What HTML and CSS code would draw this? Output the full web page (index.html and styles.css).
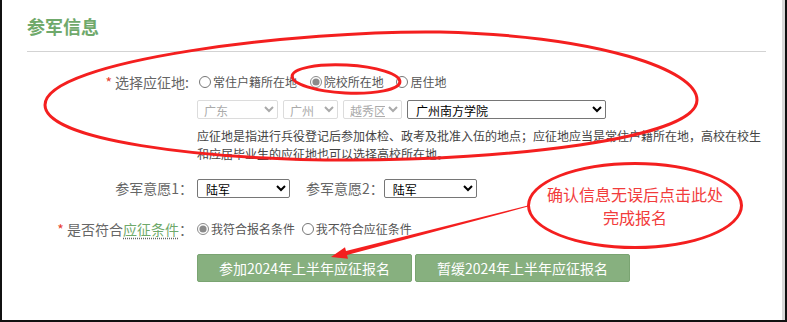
FILE: index.html
```html
<!DOCTYPE html>
<html lang="zh-CN">
<head>
    <meta charset="UTF-8">
    <meta name="viewport" content="width=device-width, initial-scale=1.0">
    <title>参军信息</title>
    <link rel="stylesheet" href="styles.css">
</head>
<body>

    <!-- Enlistment info panel -->
    <div class="frame">
        <div class="panel">
            <h2 class="title">参军信息</h2>

            <div class="form">
                <div class="row">
                    <div class="label label-place"><span class="req">*</span> 选择应征地:</div>
                    <div class="field">
                        <div class="radios">
                            <label class="opt"><input type="radio" name="place"> 常住户籍所在地</label>
                            <label class="opt"><input type="radio" name="place" checked> 院校所在地</label>
                            <label class="opt"><input type="radio" name="place"> 居住地</label>
                        </div>
                        <div class="selects">
                            <select class="sel sel-prov" disabled><option>广东</option></select>
                            <select class="sel sel-city" disabled><option>广州</option></select>
                            <select class="sel sel-dist" disabled><option>越秀区</option></select>
                            <select class="sel sel-school"><option>广州南方学院</option></select>
                        </div>
                        <p class="note">应征地是指进行兵役登记后参加体检、政考及批准入伍的地点；应征地应当是常住户籍所在地，高校在校生和应届毕业生的应征地也可以选择高校所在地。</p>
                    </div>
                </div>

                <div class="row row-wish">
                    <div class="label">参军意愿1：</div>
                    <div class="field field-inline">
                        <select class="sel sel-wish"><option>陆军</option></select>
                        <span class="label-inline">参军意愿2：</span>
                        <select class="sel sel-wish"><option>陆军</option></select>
                    </div>
                </div>

                <div class="row row-cond">
                    <div class="label"><span class="req">*</span> 是否符合<a class="term" href="#">应征条件</a>：</div>
                    <div class="field">
                        <label class="opt opt-tight"><input type="radio" name="cond" checked> 我符合报名条件</label>
                        <label class="opt"><input type="radio" name="cond"> 我不符合应征条件</label>
                    </div>
                </div>

                <div class="actions">
                    <button class="btn">参加2024年上半年应征报名</button>
                    <button class="btn">暂缓2024年上半年应征报名</button>
                </div>
            </div>
        </div>
    </div>

    <!-- Red hand-drawn annotations -->
    <svg class="marks" width="787" height="322" viewBox="0 0 787 322">
        <path d="M45 105 C45 60 300 30 440 32 C600 36 697 70 697 100 C697 140 500 160 350 160 C200 160 45 140 45 105 Z" />
        <ellipse cx="346" cy="79" rx="54" ry="14" transform="rotate(3 346 79)" />
        <polygon class="arrow" points="528,205.6 346,251 345,247.2 331,257 348,258.8 347,255 528,206.6" />
    </svg>
    <div class="callout">确认信息无误后点击此处<br>完成报名</div>

</body>
</html>
```

FILE: styles.css
```css
body {
    margin: 0;
    font-family: "Noto Sans CJK SC", sans-serif;
    color: #555;
    background: #fff;
}
.frame {
    height: 322px;
    box-sizing: border-box;
    border-left: 2px solid #111;
    border-right: 2px solid #111;
    border-bottom: 2px solid #111;
    box-shadow: inset -3px 0 0 #d8d8d8;
}
.panel {
    padding: 14px 19px 0 25px;
}
.title {
    margin: 0;
    font-size: 18px;
    line-height: 24px;
    font-weight: bold;
    color: #6fa96b;
    padding-bottom: 13px;
    border-bottom: 1px solid #d3d3d3;
}
.form {
    padding-top: 20px;
}
.row {
    display: flex;
    align-items: flex-start;
}
.label {
    width: 170px;
    flex: none;
    box-sizing: border-box;
    padding-right: 4px;
    text-align: right;
    font-size: 14px;
    line-height: 20px;
    color: #666;
    white-space: nowrap;
}
.label-place {
    padding-right: 8px;
}
.req {
    color: #e8402e;
}
.term {
    color: #6fa96b;
    text-decoration: underline dotted #666;
    text-underline-offset: 3px;
}
.field {
    flex: 1;
    font-size: 12px;
    line-height: 20px;
}
.radios {
    height: 20px;
}
.opt {
    display: inline-flex;
    align-items: center;
    margin-right: 8px;
    height: 20px;
    vertical-align: top;
}
.opt-tight {
    margin-right: 2px;
}
.opt input {
    width: 12px;
    height: 12px;
    margin: 0 2px 0 2px;
    accent-color: #8a8a8a;
}
.selects {
    display: flex;
    gap: 5px;
    margin-top: 8px;
}
.sel {
    height: 19px;
    box-sizing: border-box;
    padding: 0 0 0 4px;
    font-family: inherit;
    font-size: 12px;
    color: #000;
    background: #fff;
    border: 1px solid #767676;
    border-radius: 2px;
}
.sel:disabled {
    padding-left: 2px;
    color: #aaa;
    border-color: #dcdcdc;
    opacity: 1;
}
.sel-prov { width: 81px; }
.sel-city { width: 55px; }
.sel-dist { width: 59px; }
.sel-school { width: 199px; }
.sel-wish { width: 93px; }
.note {
    margin: 8px -6px 0 0;
    font-size: 12px;
    line-height: 18px;
    color: #444;
}
.row-wish {
    margin-top: 15px;
}
.field-inline {
    display: flex;
    align-items: center;
    height: 20px;
}
.label-inline {
    margin-left: 16px;
    font-size: 14px;
    color: #666;
    white-space: nowrap;
}
.row-cond {
    margin-top: 21px;
}
.row-cond .opt:first-child input {
    margin-left: 0;
}
.actions {
    margin-top: 15px;
    padding-left: 170px;
    display: flex;
    gap: 3px;
}
.btn {
    width: 215px;
    height: 28px;
    font-family: inherit;
    font-size: 14px;
    color: #fff;
    background: #87b07f;
    border: 1px solid #7aa472;
    border-radius: 2px;
}

/* annotations drawn on top of the screenshot */
.marks {
    position: absolute;
    left: 0;
    top: 0;
    pointer-events: none;
}
.marks path,
.marks ellipse {
    fill: none;
    stroke: #f41f1f;
    stroke-width: 3;
}
.marks .arrow {
    fill: #f41f1f;
}
.callout {
    position: absolute;
    left: 527px;
    top: 162px;
    width: 216px;
    height: 87px;
    box-sizing: border-box;
    border: 3px solid #f41f1f;
    border-radius: 50%;
    padding-top: 18px;
    text-align: center;
    font-size: 16px;
    line-height: 23px;
    color: #f23c3c;
}
```
